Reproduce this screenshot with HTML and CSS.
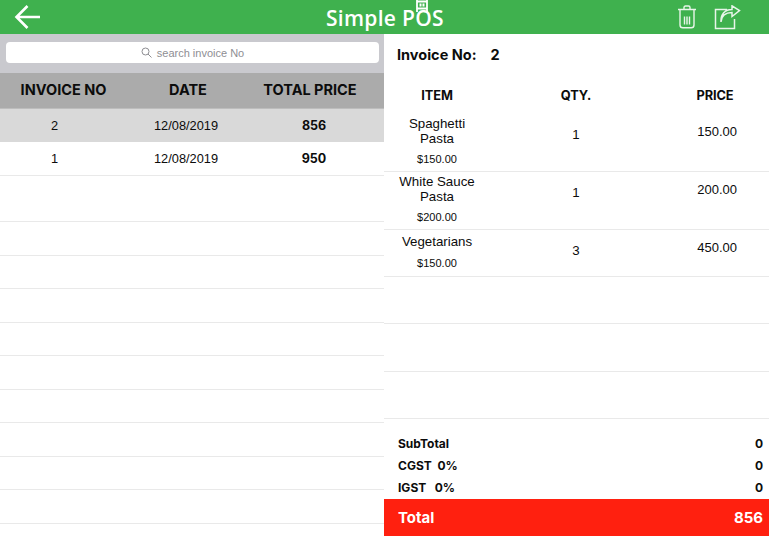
FILE: index.html
```html
<!DOCTYPE html>
<html lang="en">
<head>
<meta charset="utf-8">
<title>Simple POS</title>
<link rel="stylesheet" href="styles.css">
</head>
<body>
<div class="app">
  <header class="topbar">
    <svg class="back" width="28" height="26" viewBox="0 0 28 26"><path d="M13.500 2 L2.500 13 L13.500 24 M3 13 H26" fill="none" stroke="#fff" stroke-width="2.600"/></svg>
    <div class="brand">Simple POS
      <svg class="plug" width="14" height="13" viewBox="0 0 14 13"><path d="M2 0 V12 M12 0 V12 M2 1.500 H12 M2 8.500 H12" fill="none" stroke="#fff" stroke-width="1.800"/><path d="M4.500 3.500 h2 v3 h-2z M7.500 3.500 h2 v3 h-2z" fill="#fff"/></svg>
    </div>
    <div class="actions">
      <svg width="20" height="24" viewBox="0 0 20 24"><path d="M1 4.500 H19 M7 4.500 V2.500 Q7 1 8.500 1 H11.500 Q13 1 13 2.500 V4.500 M3 4.500 V20 Q3 22.800 5.800 22.800 H14.200 Q17 22.800 17 20 V4.500 M7.500 11.500 V19.500 M10 11.500 V19.500 M12.500 11.500 V19.500" fill="none" stroke="#e8f5e9" stroke-width="1.400"/></svg>
      <svg width="27" height="25" viewBox="0 0 27 25"><path d="M13 4.500 H1.500 V23.500 H20.500 V14 M7 17 C7.500 10.500 12 7.500 18 7.500 V11.500 L25.500 5.500 L18 0.800 V4.500 C11 4.500 6.500 9 7 17 Z" fill="none" stroke="#e8f5e9" stroke-width="1.500"/></svg>
    </div>
  </header>
  <main class="split">
    <section class="left">
      <div class="searchwrap">
        <div class="search">
          <svg width="11" height="11" viewBox="0 0 11 11"><circle cx="4.500" cy="4.500" r="3.500" fill="none" stroke="#8e8e93" stroke-width="1"/><path d="M7 7 L10.500 10.500" stroke="#8e8e93" stroke-width="1"/></svg>
          <span>search invoice No</span>
        </div>
      </div>
      <div class="ihead">
        <div>INVOICE NO</div><div>DATE</div><div>TOTAL PRICE</div>
      </div>
      <div class="ibody selected"><div>2</div><div>12/08/2019</div><div class="strong">856</div></div>
      <div class="ibody first"><div>1</div><div>12/08/2019</div><div class="strong">950</div></div>
      <div class="blank tall"></div>
      <div class="blank"></div><div class="blank"></div><div class="blank"></div><div class="blank"></div>
      <div class="blank"></div><div class="blank"></div><div class="blank"></div><div class="blank"></div><div class="blank"></div>
    </section>
    <section class="right">
      <div class="invno"><span>Invoice No:</span><span>2</span></div>
      <div class="drow dhead"><div>ITEM</div><div>QTY.</div><div class="pr">PRICE</div></div>
      <div class="drow line two">
        <div class="item"><div class="name">Spaghetti<br>Pasta</div><div class="unit">$150.00</div></div>
        <div class="qty">1</div><div class="price">150.00</div>
      </div>
      <div class="drow line two">
        <div class="item"><div class="name">White Sauce<br>Pasta</div><div class="unit">$200.00</div></div>
        <div class="qty">1</div><div class="price">200.00</div>
      </div>
      <div class="drow line one">
        <div class="item item-single"><div class="name">Vegetarians</div><div class="unit unit-wide">$150.00</div></div>
        <div class="qty">3</div><div class="price">450.00</div>
      </div>
      <div class="empty"></div><div class="empty"></div><div class="empty"></div>
      <div class="totals">
        <div class="trow"><span>SubTotal</span><span>0</span></div>
        <div class="trow"><span>CGST&nbsp; 0%</span><span>0</span></div>
        <div class="trow"><span>IGST&nbsp;&nbsp; 0%</span><span>0</span></div>
      </div>
      <div class="grand"><span>Total</span><span>856</span></div>
    </section>
  </main>
</div>
</body>
</html>
```
FILE: styles.css
```css
* { box-sizing: border-box; }
html, body { margin: 0; padding: 0; background: #fff; }
body { font-family: Inter, "Liberation Sans", sans-serif; color: #0c0c0c; }
.app { width: 769px; height: 536px; overflow: hidden; display: flex; flex-direction: column; }
.topbar { height: 34px; flex: none; background: #3fb14e; display: flex; align-items: center; position: relative; padding: 0 28px 0 14px; justify-content: space-between; }
.back { display: block; margin-top: -1px; }
.brand { position: absolute; left: 326px; top: 3px; font-family: "Open Sans", sans-serif; font-size: 21px; line-height: 30px; font-weight: 600; letter-spacing: 0.3px; color: #fff; white-space: nowrap; }
.plug { position: absolute; left: 89px; top: -3px; }
.actions { display: flex; gap: 17px; align-items: center; }
.split { flex: 1; display: flex; min-height: 0; }
.left { width: 384px; flex: none; }
.right { flex: 1; display: flex; flex-direction: column; min-width: 0; }
.searchwrap { height: 39px; background: #c9c9ce; padding: 8px 5px 7px 6px; }
.search { height: 21px; background: #fff; border-radius: 4px; display: flex; align-items: center; justify-content: center; gap: 5px; font-family: "Liberation Sans", sans-serif; font-size: 11px; color: #8e8e93; }
.ihead { height: 36px; background: #ababab; font-size: 14.500px; font-weight: 700; border-bottom: 1px solid #bdbdbd; display: grid; grid-template-columns: 127px 122px 122px; align-items: center; text-align: center; padding-bottom: 2px; }
.ibody { font-family: "Liberation Sans", sans-serif; font-size: 12.800px; display: grid; grid-template-columns: 109px 154px 102px; align-items: center; text-align: center; padding-bottom: 1px; }
.selected { height: 33px; background: #d9d9d9; }
.first { height: 34px; border-bottom: 1px solid #e9e9e9; }
.strong { font-family: Inter, sans-serif; font-size: 12.500px; font-weight: 700; }
.blank { height: 33.500px; border-bottom: 1px solid #e9e9e9; }
.tall { height: 46px; }
.invno { height: 38px; flex: none; padding: 3px 0 0 13px; display: flex; gap: 14px; align-items: center; font-size: 14.500px; font-weight: 700; }
.drow { display: grid; flex: none; grid-template-columns: 106px 172px 107px; text-align: center; align-items: start; }
.dhead { height: 42px; font-size: 12.800px; font-weight: 700; letter-spacing: -0.100px; padding-top: 16px; }
.pr { padding-right: 1px; }
.line { border-bottom: 1px solid #e9e9e9; font-family: "Liberation Sans", sans-serif; font-size: 13.300px; }
.two { height: 58px; }
.one { height: 47px; }
.name { line-height: 15px; }
.unit { font-size: 11px; margin-top: 6px; line-height: 14px; }
.unit-wide { margin-top: 7px; }
.item { padding-top: 2px; }
.item-single { padding-top: 4px; }
.qty { padding-top: 13px; }
.price { text-align: right; padding-right: 32px; padding-top: 10px; font-size: 13px; }
.empty { height: 47.400px; flex: none; border-bottom: 1px solid #e9e9e9; }
.totals { flex: 1; min-height: 0; padding: 14px 6px 0 14px; font-size: 12px; font-weight: 700; }
.trow { display: flex; justify-content: space-between; height: 22px; line-height: 22px; }
.grand { height: 37px; flex: none; background: #ff200f; color: #fff; display: flex; align-items: center; justify-content: space-between; padding: 0 6px 0 14px; font-size: 15px; font-weight: 700; }
```
